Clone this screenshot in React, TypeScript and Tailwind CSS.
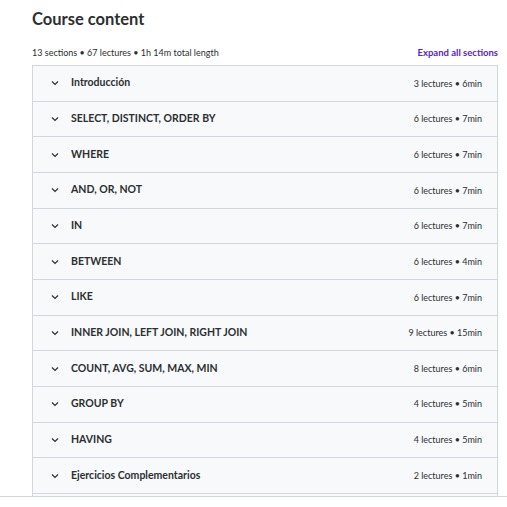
import React from "react";

const rows: [string, string][] = [
  ["Introducción", "3 lectures • 6min"],
  ["SELECT, DISTINCT, ORDER BY", "6 lectures • 7min"],
  ["WHERE", "6 lectures • 7min"],
  ["AND, OR, NOT", "6 lectures • 7min"],
  ["IN", "6 lectures • 7min"],
  ["BETWEEN", "6 lectures • 4min"],
  ["LIKE", "6 lectures • 7min"],
  ["INNER JOIN, LEFT JOIN, RIGHT JOIN", "9 lectures • 15min"],
  ["COUNT, AVG, SUM, MAX, MIN", "8 lectures • 6min"],
  ["GROUP BY", "4 lectures • 5min"],
  ["HAVING", "4 lectures • 5min"],
  ["Ejercicios Complementarios", "2 lectures • 1min"],
  ["", ""],
];

function Chevron() {
  return (
    <svg width="8" height="6" viewBox="0 0 8 6" className="shrink-0">
      <path d="M1 1.5 L4 4.5 L7 1.5" fill="none" stroke="#2d2f31" strokeWidth="1.2" />
    </svg>
  );
}

export default function App() {
  return (
    <div
      className="w-[507px] h-[497px] overflow-hidden bg-white border-b border-[#d1d7dc] text-[#2d2f31]"
      style={{ fontFamily: 'Lato, "Noto Sans", sans-serif' }}
    >
      <div className="pl-[32px] pr-[9px]">
        <h2 className="text-[16.5px] font-bold leading-[20px] pt-[9px]">Course content</h2>
        <div className="flex items-center justify-between mt-[18px] h-[12px]">
          <span className="text-[9px] text-[#2d2f31]">13 sections • 67 lectures • 1h 14m total length</span>
          <span className="text-[9.5px] font-bold text-[#5624d0]">Expand all sections</span>
        </div>
        <div className="mt-[6px] w-[466px] border border-[#d1d7dc] bg-[#f7f9fa]">
          {rows.map(([t, m], i) => (
            <div
              key={i}
              className="h-[35.67px] border-b border-[#d1d7dc] flex items-center pl-[18px] pr-[15px]"
            >
              <Chevron />
              <span className="ml-[12px] text-[10.5px] font-bold flex-1">{t}</span>
              <span className="text-[9px]">{m}</span>
            </div>
          ))}
        </div>
      </div>
    </div>
  );
}
